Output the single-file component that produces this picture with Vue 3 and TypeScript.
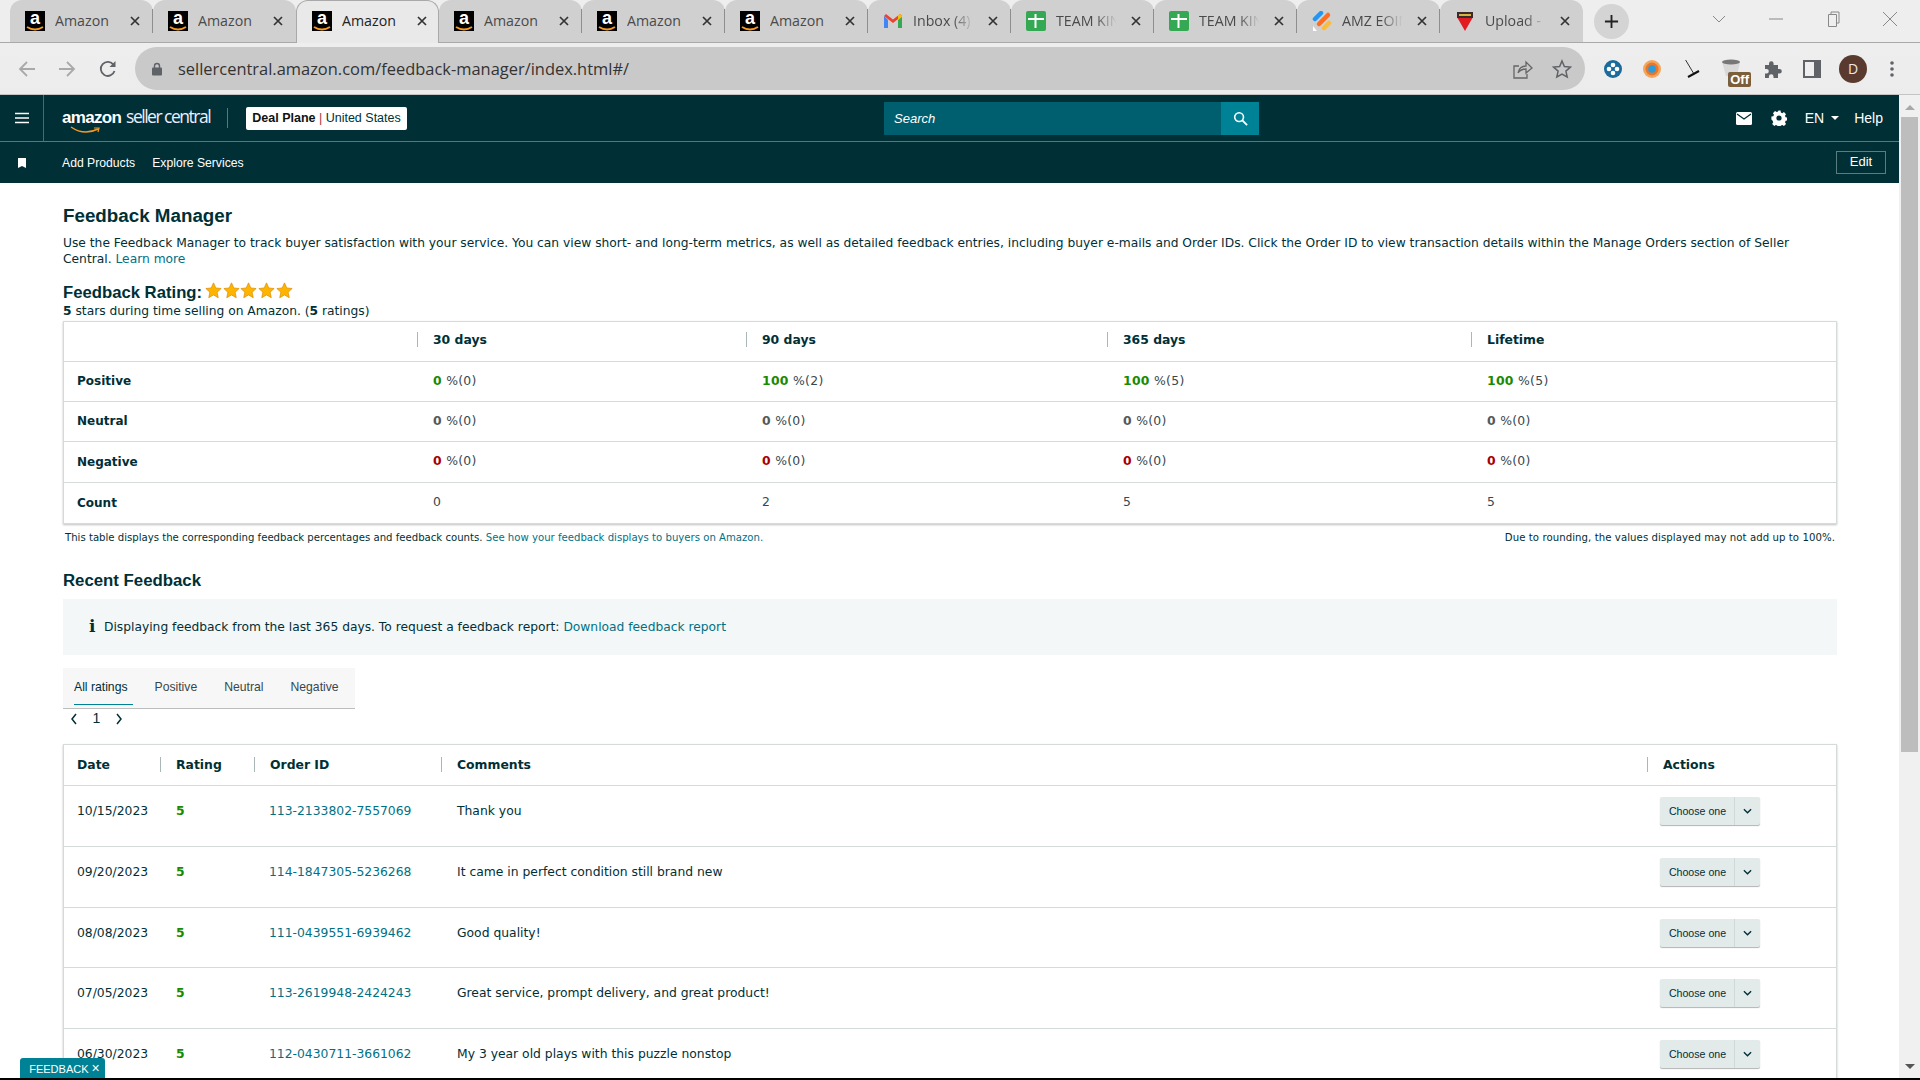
<script setup lang="ts">
interface Tab { title: string; kind: string; active?: boolean; fade?: boolean; noSep?: boolean }
const tabs: Tab[] = [
  { title: 'Amazon', kind: 'amazon' },
  { title: 'Amazon', kind: 'amazon', noSep: true },
  { title: 'Amazon', kind: 'amazon', active: true, noSep: true },
  { title: 'Amazon', kind: 'amazon' },
  { title: 'Amazon', kind: 'amazon' },
  { title: 'Amazon', kind: 'amazon' },
  { title: 'Inbox (4)', kind: 'gmail', fade: true },
  { title: 'TEAM KING', kind: 'sheet', fade: true },
  { title: 'TEAM KING', kind: 'sheet', fade: true },
  { title: 'AMZ EOIN', kind: 'amz', fade: true },
  { title: 'Upload - Ama', kind: 'upload', fade: true, noSep: true },
]
interface Metric { label: string; tone: string; cells: [string, string][] }
const metrics: Metric[] = [
  { label: 'Positive', tone: 'green', cells: [['0', '(0)'], ['100', '(2)'], ['100', '(5)'], ['100', '(5)']] },
  { label: 'Neutral', tone: 'grey', cells: [['0', '(0)'], ['0', '(0)'], ['0', '(0)'], ['0', '(0)']] },
  { label: 'Negative', tone: 'red', cells: [['0', '(0)'], ['0', '(0)'], ['0', '(0)'], ['0', '(0)']] },
]
const counts = ['0', '2', '5', '5']
const periods = ['30 days', '90 days', '365 days', 'Lifetime']
const ratingTabs = ['All ratings', 'Positive', 'Neutral', 'Negative']
const feedback = [
  { date: '10/15/2023', id: '113-2133802-7557069', text: 'Thank you', h: 'r61' },
  { date: '09/20/2023', id: '114-1847305-5236268', text: 'It came in perfect condition still brand new', h: 'r61' },
  { date: '08/08/2023', id: '111-0439551-6939462', text: 'Good quality!', h: 'r60' },
  { date: '07/05/2023', id: '113-2619948-2424243', text: 'Great service, prompt delivery, and great product!', h: 'r61' },
  { date: '06/30/2023', id: '112-0430711-3661062', text: 'My 3 year old plays with this puzzle nonstop', h: 'r61' },
]
</script>

<template>
  <div class="app">
    <div class="strip">
      <div
        v-for="(t, i) in tabs"
        :key="i"
        class="tab"
        :class="{ active: t.active, sep: !t.noSep }"
      >
        <span v-if="t.kind === 'amazon'" class="fav-amazon">
          <span class="fav-a">a</span>
          <svg class="fav-smile" viewBox="0 0 20 5"><path d="M2 1 Q10 6 18 1" fill="none" stroke="#f59a23" stroke-width="2" /></svg>
        </span>
        <svg v-else-if="t.kind === 'gmail'" class="fav" viewBox="0 0 20 20">
          <path d="M1 5v12h4V9z" fill="#4285f4" />
          <path d="M19 5v12h-4V9z" fill="#34a853" />
          <path d="M1 5l9 7 9-7-2-2-7 5.400L3 3z" fill="#ea4335" />
          <path d="M15 4v5l4-3V5l-2-2z" fill="#fbbc04" />
        </svg>
        <svg v-else-if="t.kind === 'sheet'" class="fav" viewBox="0 0 20 20">
          <rect width="20" height="20" rx="2" fill="#34a853" />
          <path d="M2 8h16M9.500 3v14" stroke="#fff" stroke-width="2" />
        </svg>
        <svg v-else-if="t.kind === 'amz'" class="fav" viewBox="0 0 20 20">
          <path d="M3 8L9 2" stroke="#2196f3" stroke-width="4.500" stroke-linecap="round" />
          <path d="M7 13L16 4" stroke="#ff6d1f" stroke-width="4.500" stroke-linecap="round" />
          <path d="M12 17L17 12" stroke="#fbbc3c" stroke-width="4.500" stroke-linecap="round" />
          <path d="M1 15l4 5H1z" fill="#fff" />
        </svg>
        <svg v-else class="fav" viewBox="0 0 20 20">
          <path d="M2 6h16L10 20z" fill="#e21b23" />
          <rect x="2" y="1" width="16" height="6" fill="#3a2a2a" />
          <rect x="4" y="3" width="12" height="2" fill="#d8b33c" />
        </svg>
        <span class="tab-title" :class="{ fade: t.fade }">{{ t.title }}</span>
        <svg class="tab-x" viewBox="0 0 10 10"><path d="M1 1l8 8M9 1l-8 8" stroke="#333" stroke-width="1.700" fill="none" /></svg>
      </div>
      <div class="plus"><svg viewBox="0 0 16 16"><path d="M8 1v14M1 8h14" stroke="#222" stroke-width="2" /></svg></div>
      <div class="winctl">
        <svg class="wc w-chev" viewBox="0 0 16 16"><path d="M2 5l6 6 6-6" fill="none" stroke="#888" /></svg>
        <svg class="wc w-min" viewBox="0 0 16 16"><path d="M1 8h14" stroke="#888" /></svg>
        <svg class="wc w-res" viewBox="0 0 16 16"><path d="M3.500 3.500h8v12h-8zM6 3.500V1h8v11h-2.500" fill="none" stroke="#888" /></svg>
        <svg class="wc w-close" viewBox="0 0 16 16"><path d="M1 1l14 14M15 1L1 15" stroke="#888" /></svg>
      </div>
    </div>

    <div class="toolbar">
      <svg class="tb-nav" viewBox="0 0 18 18"><path d="M17 9H2M9 2L2 9l7 7" fill="none" stroke="#a9a9a9" stroke-width="1.800" /></svg>
      <svg class="tb-nav tb-fwd" viewBox="0 0 18 18"><path d="M1 9h15M9 2l7 7-7 7" fill="none" stroke="#a9a9a9" stroke-width="1.800" /></svg>
      <svg class="tb-nav tb-rel" viewBox="0 0 18 18"><path d="M15.500 11a7 7 0 1 1-.9-6" fill="none" stroke="#5f6368" stroke-width="1.800" /><path d="M16.500 1v6h-6z" fill="#5f6368" /></svg>
      <div class="pill">
        <svg class="lock" viewBox="0 0 12 14"><rect x="1" y="5.500" width="10" height="8" rx="1" fill="#5f6368" /><path d="M3.500 6V4a2.500 2.500 0 0 1 5 0v2" fill="none" stroke="#5f6368" stroke-width="1.400" /></svg>
        <span class="url">sellercentral.amazon.com/feedback-manager/index.html#/</span>
        <svg class="pill-share" viewBox="0 0 20 20"><path d="M6 7H1v12h13v-4" fill="none" stroke="#666" stroke-width="1.300" /><path d="M5 14c1-5 4-7 8-7V3l6 6-6 5v-4c-3 0-6 1-8 4z" fill="none" stroke="#666" stroke-width="1.300" /></svg>
        <svg class="pill-star" viewBox="0 0 20 20"><path d="M10 2l2.400 5.500 6 .6-4.500 4 1.300 5.900L10 15l-5.200 3 1.300-5.900-4.500-4 6-.6z" fill="none" stroke="#5f6368" stroke-width="1.500" /></svg>
      </div>
      <div class="exts">
        <svg class="ext" viewBox="0 0 18 18"><circle cx="9" cy="9" r="9" fill="#1b6a9c" /><circle cx="9" cy="5" r="2.300" fill="#fff" /><circle cx="9" cy="13" r="2.300" fill="#fff" /><circle cx="5" cy="9" r="2.300" fill="#fff" /><circle cx="13" cy="9" r="2.300" fill="#fff" /></svg>
        <svg class="ext" viewBox="0 0 18 18"><circle cx="9" cy="9" r="9" fill="#f2a65a" /><circle cx="9" cy="9" r="6.500" fill="#e8762c" /><circle cx="9" cy="9" r="3.800" fill="#2a9bdc" /></svg>
        <svg class="ext" viewBox="0 0 18 18"><path d="M3 -1L12 14" stroke="#333" stroke-width="1" /><path d="M6 17L17 11" stroke="#111" stroke-width="2" /></svg>
        <span class="ext-off">
          <svg class="off-cup" viewBox="0 0 22 18"><path d="M1 3h18l-3 14H5z" fill="#d8d8d8" /><ellipse cx="10" cy="3" rx="9" ry="2.500" fill="#777" /></svg>
          <span class="off-badge">Off</span>
        </span>
        <svg class="ext" viewBox="0 0 18 18"><path d="M1 5h4V3.500a2.300 2.300 0 0 1 4.600 0V5h4.400v4h1.500a2.300 2.300 0 0 1 0 4.600H14V18H9.500v-1.500a2.300 2.300 0 0 0-4.600 0V18H1v-4.500h1.500a2.300 2.300 0 0 0 0-4.600H1z" fill="#5f6368" /></svg>
        <svg class="ext" viewBox="0 0 18 18"><path d="M0 0h18v18H0z" fill="#5f6368" /><path d="M2 2h9v14H2z" fill="#eee" /></svg>
        <span class="avatar">D</span>
        <svg class="dots" viewBox="0 0 4 18"><circle cx="2" cy="3" r="1.800" fill="#5f6368" /><circle cx="2" cy="9" r="1.800" fill="#5f6368" /><circle cx="2" cy="15" r="1.800" fill="#5f6368" /></svg>
      </div>
    </div>

    <div class="page">
      <div class="viewport">
        <header class="topbar">
          <div class="burger"><svg viewBox="0 0 14 12"><path d="M0 1.500h14M0 6h14M0 10.500h14" stroke="#fff" stroke-width="1.600" /></svg></div>
          <div class="logo">
            <span class="logo-a">amazon</span><span class="logo-s">seller central</span>
            <svg class="logo-smile" viewBox="0 0 32 8"><path d="M1 1Q14 10 28 3" fill="none" stroke="#f59a23" stroke-width="1.500" /><path d="M24 2l5 0-1 4" fill="none" stroke="#f59a23" stroke-width="1.200" /></svg>
          </div>
          <div class="logo-div"></div>
          <div class="badge"><b>Deal Plane</b> <span class="pipe">|</span> United States</div>
          <div class="search">
            <span class="search-ph">Search</span>
            <div class="search-btn"><svg viewBox="0 0 16 16"><circle cx="6.500" cy="6.500" r="4.700" fill="none" stroke="#fff" stroke-width="1.700" /><path d="M10 10l5 5" stroke="#fff" stroke-width="2" /></svg></div>
          </div>
          <div class="top-right">
            <svg class="mail" viewBox="0 0 16 13"><rect width="16" height="13" rx="1.500" fill="#fff" /><path d="M1 2l7 5 7-5" fill="none" stroke="#002f36" stroke-width="1.300" /></svg>
            <svg class="gear" viewBox="0 0 16 16"><path d="M8 0l1.600.2.400 2 1.500.7 1.700-1.100 2.200 2.200-1.100 1.700.6 1.500 2.100.4v3l-2 .4-.7 1.500 1.100 1.700-2.200 2.200-1.700-1.100-1.500.6-.4 2.100h-3l-.4-2-1.500-.7-1.700 1.100-2.200-2.200 1.100-1.700-.6-1.500L0 9.500v-3l2-.4.700-1.500L1.600 2.900l2.200-2.200 1.700 1.100L7 1.200 7.400 0z" fill="#fff" transform="translate(0.400 0.400) scale(0.95)" /><circle cx="8" cy="8" r="2.600" fill="#002f36" /></svg>
            <span class="lang">EN</span>
            <span class="caret"></span>
            <span class="help">Help</span>
          </div>
        </header>
        <nav class="navbar">
          <svg class="bookmark" viewBox="0 0 8 10"><path d="M0 0h8v10L4 8 0 10z" fill="#fff" /></svg>
          <span class="nav-item">Add Products</span>
          <span class="nav-item nav-second">Explore Services</span>
          <span class="edit">Edit</span>
        </nav>

        <main class="content">
          <h1 class="title">Feedback Manager</h1>
          <p class="intro">Use the Feedback Manager to track buyer satisfaction with your service. You can view short- and long-term metrics, as well as detailed feedback entries, including buyer e-mails and Order IDs. Click the Order ID to view transaction details within the Manage Orders section of Seller Central. <a class="link">Learn more</a></p>
          <div class="rating-head">
            <h2 class="rating-title">Feedback Rating:</h2>
            <svg v-for="n in 5" :key="n" class="star" viewBox="0 0 20 20"><path d="M10 1l2.700 6 6.300.7-4.700 4.300 1.300 6.500L10 15.200 4.400 18.500 5.700 12 1 7.700 7.300 7z" fill="#ffb400" stroke="#d98a00" stroke-width=".8" /></svg>
          </div>
          <p class="rating-sub"><b>5</b> stars during time selling on Amazon. (<b>5</b> ratings)</p>

          <section class="card metrics">
            <div class="m-row m-head">
              <div class="m-cell"></div>
              <div v-for="p in periods" :key="p" class="m-cell"><span class="th">{{ p }}</span></div>
            </div>
            <div v-for="m in metrics" :key="m.label" class="m-row" :class="{ 'm-tall': m.label === 'Negative' }">
              <div class="m-cell m-label">{{ m.label }}</div>
              <div v-for="(c, i) in m.cells" :key="i" class="m-cell m-val"><b :class="m.tone">{{ c[0] }}</b> %{{ c[1] }}</div>
            </div>
            <div class="m-row m-last">
              <div class="m-cell m-label">Count</div>
              <div v-for="(c, i) in counts" :key="i" class="m-cell m-val">{{ c }}</div>
            </div>
          </section>
          <div class="notes">
            <span>This table displays the corresponding feedback percentages and feedback counts. <a class="link">See how your feedback displays to buyers on Amazon.</a></span>
            <span class="note-right">Due to rounding, the values displayed may not add up to 100%.</span>
          </div>

          <h2 class="recent">Recent Feedback</h2>
          <div class="info">
            <span class="info-i">i</span>
            <span>Displaying feedback from the last 365 days. To request a feedback report: <a class="link">Download feedback report</a></span>
          </div>
          <div class="rtabs">
            <span v-for="(r, i) in ratingTabs" :key="r" class="rtab" :class="{ on: i === 0 }">{{ r }}</span>
          </div>
          <div class="pager">
            <svg class="pg" viewBox="0 0 8 12"><path d="M6 1L2 6l4 5" fill="none" stroke="#002f36" stroke-width="1.500" /></svg>
            <span class="pg-n">1</span>
            <svg class="pg" viewBox="0 0 8 12"><path d="M2 1l4 5-4 5" fill="none" stroke="#002f36" stroke-width="1.500" /></svg>
          </div>

          <section class="card fb">
            <div class="f-row f-head">
              <div class="f-cell"><span class="th-first">Date</span></div>
              <div class="f-cell"><span class="th">Rating</span></div>
              <div class="f-cell"><span class="th">Order ID</span></div>
              <div class="f-cell"><span class="th">Comments</span></div>
              <div class="f-cell"><span class="th">Actions</span></div>
            </div>
            <div v-for="f in feedback" :key="f.id" class="f-row" :class="f.h">
              <div class="f-cell f-date">{{ f.date }}</div>
              <div class="f-cell f-rate"><b class="green">5</b></div>
              <div class="f-cell f-id"><a class="link">{{ f.id }}</a></div>
              <div class="f-cell f-text">{{ f.text }}</div>
              <div class="f-cell f-act">
                <div class="choose"><span class="choose-l">Choose one</span><span class="choose-r"><svg viewBox="0 0 10 6"><path d="M1 1l4 4 4-4" fill="none" stroke="#002f36" stroke-width="1.500" /></svg></span></div>
              </div>
            </div>
          </section>
        </main>
        <div class="fb-tab">FEEDBACK <span class="fb-x">×</span></div>
      </div>
      <div class="scrollbar">
        <span class="sb-up"></span>
        <div class="sb-thumb"></div>
        <span class="sb-down"></span>
      </div>
    </div>
    <div class="blackbar"></div>
  </div>
</template>

<style>
html, body { margin: 0; padding: 0; background: #fff; overflow: hidden; }
</style>

<style scoped>
.app { width: 1920px; height: 1080px; display: flex; flex-direction: column; overflow: hidden; font-family: "DejaVu Sans", sans-serif; color: #002f36; }
.strip { height: 43px; flex: none; box-sizing: border-box; display: flex; padding-left: 10px; background: #eeeeee; border-bottom: 1px solid #a9a9a9; }
.tab { width: 143px; height: 42px; flex: none; box-sizing: border-box; position: relative; display: flex; align-items: center; padding-left: 15px; background: #d0d0d0; border-radius: 12px 12px 0 0; }
.tab.sep::after { content: ""; position: absolute; right: 0; top: 9px; height: 24px; width: 1px; background: #8e8e8e; }
.tab.active { background: #e9e9e9; border: 1px solid #a9a9a9; border-bottom: 0; padding: 0 0 2px 15px; height: 43px; z-index: 1; }
.fav-amazon { width: 20px; height: 20px; background: #000; position: relative; flex: none; overflow: hidden; text-align: center; }
.fav-a { display: block; color: #fff; font: bold 18px/15px "Liberation Sans", sans-serif; }
.fav-smile { position: absolute; left: 0; bottom: 0; width: 20px; height: 5px; }
.fav { width: 20px; height: 20px; flex: none; }
.tab-title { width: 66px; margin-left: 10px; font: 14.200px/20px "Open Sans", sans-serif; color: #4a4a4a; white-space: nowrap; overflow: hidden; flex: none; }
.tab.active .tab-title { color: #222; }
.tab-title.fade { -webkit-mask-image: linear-gradient(90deg, #000 60%, transparent 92%); mask-image: linear-gradient(90deg, #000 60%, transparent 92%); }
.tab-x { width: 10px; height: 10px; margin-left: 9px; flex: none; }
.plus { width: 35px; height: 35px; margin: 4px 0 0 11px; border-radius: 50%; background: #d4d4d4; display: flex; align-items: center; justify-content: center; flex: none; }
.plus svg { width: 15px; height: 15px; }
.winctl { display: flex; align-items: center; height: 38px; margin-left: 82px; }
.wc { width: 16px; height: 16px; flex: none; }
.w-min, .w-res, .w-close { margin-left: 41px; }
.toolbar { height: 52px; flex: none; box-sizing: border-box; display: flex; align-items: center; background: linear-gradient(#eeeeee, #ececec); border-bottom: 1px solid #c4c4c4; padding-bottom: 0; }
.tb-nav { width: 18px; height: 18px; margin-left: 18px; flex: none; }
.tb-fwd { margin-left: 22px; }
.tb-rel { margin-left: 23px; }
.pill { width: 1450px; height: 43px; margin-left: 18px; flex: none; border-radius: 22px; background: #c9c9c9; display: flex; align-items: center; }
.lock { width: 12px; height: 14px; margin-left: 16px; flex: none; }
.url { margin-left: 15px; font: 16.450px/24px "Open Sans", sans-serif; color: #333; white-space: nowrap; }
.pill-share { width: 20px; height: 20px; margin-left: auto; flex: none; }
.pill-star { width: 20px; height: 20px; margin: 0 13px 0 19px; flex: none; }
.exts { display: flex; align-items: center; margin-left: 19px; position: relative; }
.ext { width: 18px; height: 18px; flex: none; margin-right: 21px; }
.ext-off { width: 28px; height: 26px; margin: 6px 15px 0 0; position: relative; flex: none; }
.off-cup { position: absolute; left: 0; top: 0; width: 22px; height: 18px; }
.off-badge { position: absolute; right: -2px; bottom: -2px; background: #7b5e3a; color: #fff; font: bold 13px/15px "Liberation Sans", sans-serif; padding: 0 2px; border-radius: 2px; }
.avatar { width: 28px; height: 28px; border-radius: 50%; background: #5a3a2e; color: #f0e8e4; font: 14px/28px "Open Sans", sans-serif; text-align: center; flex: none; margin-left: -3px; }
.dots { width: 4px; height: 18px; margin-left: 23px; flex: none; }

.page { flex: 1; min-height: 0; display: flex; }
.viewport { flex: 1; min-width: 0; overflow: hidden; position: relative; background: #fff; }
.scrollbar { width: 21px; flex: none; background: #f0f0f0; display: flex; flex-direction: column; align-items: center; }
.sb-up, .sb-down { width: 0; height: 0; border-left: 5px solid transparent; border-right: 5px solid transparent; flex: none; }
.sb-up { border-bottom: 5px solid #a8a8a8; margin-top: 10px; }
.sb-thumb { width: 17px; height: 635px; margin-top: 7px; background: #bdbdbd; flex: none; }
.sb-down { border-top: 5px solid #555; margin-top: auto; margin-bottom: 9px; }
.blackbar { height: 2px; background: #000; flex: none; }

.topbar { height: 47px; box-sizing: border-box; background: #002f36; border-bottom: 1px solid #5b7679; display: flex; align-items: center; color: #fff; font-family: "Liberation Sans", sans-serif; }
.burger { width: 44px; height: 46px; box-sizing: border-box; border-right: 1px solid #4c6a6d; display: flex; align-items: center; justify-content: center; flex: none; }
.burger svg { width: 14px; height: 12px; }
.logo { margin-left: 18px; position: relative; display: flex; align-items: baseline; height: 24px; width: 149px; flex: none; white-space: nowrap; margin-top: -4px; }
.logo-a { font: bold 17px/24px "Liberation Sans", sans-serif; letter-spacing: -0.700px; }
.logo-s { font: 17.500px/24px "Open Sans", sans-serif; letter-spacing: -1.500px; margin-left: 5px; color: #eef; }
.logo-smile { position: absolute; left: 8px; top: 22px; width: 32px; height: 8px; }
.logo-div { width: 1px; height: 20px; background: #55797c; margin-left: 16px; flex: none; }
.badge { margin-left: 18px; height: 23px; box-sizing: border-box; width: 161px; background: #fff; border-radius: 2px; color: #002f36; font-size: 12.500px; line-height: 23px; text-align: center; white-space: nowrap; flex: none; }
.badge b { font-weight: bold; color: #111; }
.pipe { color: #a33; }
.search { margin-left: 477px; width: 375px; height: 33px; background: #005f6e; display: flex; align-items: center; justify-content: space-between; flex: none; }
.search-ph { margin-left: 10px; font-size: 13px; font-style: italic; color: #fff; }
.search-btn { width: 38px; height: 33px; background: #008296; display: flex; align-items: center; justify-content: center; }
.search-btn svg { width: 15px; height: 15px; }
.top-right { margin-left: auto; display: flex; align-items: center; margin-right: 16px; font-size: 14px; }
.mail { width: 16px; height: 13px; flex: none; }
.gear { width: 16px; height: 16px; margin-left: 19px; flex: none; }
.lang { margin-left: 18px; }
.caret { width: 0; height: 0; margin-left: 7px; border-left: 4px solid transparent; border-right: 4px solid transparent; border-top: 4px solid #fff; }
.help { margin-left: 15px; font-size: 14px; }

.navbar { height: 41px; background: #002f36; display: flex; align-items: center; color: #fff; font: 12.200px "Liberation Sans", sans-serif; }
.bookmark { width: 8px; height: 10px; margin-left: 18px; flex: none; }
.nav-item { margin-left: 36px; font-weight: 500; }
.nav-second { margin-left: 17px; }
.edit { margin-left: auto; margin-right: 13px; width: 50px; height: 23px; box-sizing: border-box; border: 1px solid #5b7d80; text-align: center; line-height: 20px; font-size: 13px; }

.content { padding: 21px 62px 0 63px; }
.title { margin: 0; font: bold 18.800px/24px "Liberation Sans", sans-serif; }
.intro { margin: 7px 0 0; font-size: 12.270px; line-height: 16px; }
.link { color: #007185; text-decoration: none; }
.rating-head { margin-top: 14px; height: 23px; display: flex; align-items: center; }
.rating-title { margin: 0 3px 0 0; font: bold 16.700px/24px "Liberation Sans", sans-serif; }
.star { width: 17px; height: 17px; margin-right: 0.700px; margin-top: -4px; flex: none; }
.rating-sub { margin: -1px 0 0; font-size: 12.270px; line-height: 16px; }
.card { border: 1px solid #d5dbdb; box-shadow: 0 1px 2px rgba(0, 0, 0, 0.25); background: #fff; box-sizing: border-box; }
.metrics { margin-top: 2px; }
.m-row { display: grid; grid-template-columns: 353px 329px 361px 364px 1fr; height: 40px; box-sizing: border-box; border-bottom: 1px solid #d5dbdb; align-items: center; font-size: 12.400px; padding-bottom: 1px; }
.m-head { padding-bottom: 4px; }
.m-tall { height: 41px; }
.m-last { border-bottom: 0; }
.m-cell { padding-left: 0; }
.m-label { font-weight: bold; padding-left: 13px; font-size: 12px; }
.m-val { padding-left: 16px; color: #37474f; letter-spacing: .3px; margin-top: -2px; }
.th { display: block; border-left: 1px solid #a9b7b8; padding-left: 15px; font-weight: bold; line-height: 15px; font-size: 12.400px; }
.th-first { display: block; padding-left: 13px; font-weight: bold; line-height: 15px; font-size: 12.400px; }
.green { color: #1a8a00; }
.grey { color: #565959; }
.red { color: #a80000; }
.notes { margin-top: 7px; display: flex; justify-content: space-between; padding: 0 2px; font-size: 10.150px; line-height: 14px; color: #002f36; }
.note-right { letter-spacing: .08px; }
.recent { margin: 24px 0 0; font: bold 16.800px/24px "Liberation Sans", sans-serif; }
.info { margin-top: 6px; height: 56px; background: #f4f7f7; display: flex; align-items: center; padding-left: 26px; font-size: 12.270px; }
.info-i { width: 15px; font: bold 17px "DejaVu Serif", serif; flex: none; margin-top: -2px; }
.rtabs { margin-top: 13px; width: 292px; height: 41px; box-sizing: border-box; background: #f7f7f7; border-bottom: 1px solid #bdbdbd; display: flex; padding-left: 11px; font: 12.200px "Liberation Sans", sans-serif; color: #37474f; white-space: nowrap; }
.rtab { margin-right: 27px; line-height: 38px; height: 37px; box-sizing: border-box; }
.rtab.on { color: #002f36; border-bottom: 1px solid #008296; padding-right: 5px; margin-right: 22px; }
.pager { height: 20px; display: flex; align-items: center; padding-left: 7px; }
.pg { width: 8px; height: 12px; flex: none; }
.pg-n { width: 37px; text-align: center; font: 14px "Liberation Sans", sans-serif; margin-top: -2px; }
.fb { margin-top: 15px; }
.f-row { display: grid; grid-template-columns: 96px 94px 187px 1206px 1fr; height: 61px; box-sizing: border-box; border-bottom: 1px solid #d5dbdb; font-size: 12.350px; }
.r60 { height: 60px; }
.f-head { height: 41px; align-items: center; font-weight: bold; padding-bottom: 2px; }
.f-cell { min-width: 0; }
.f-date { padding: 17px 0 0 13px; white-space: nowrap; line-height: 16px; }
.f-rate { padding: 17px 0 0 16px; line-height: 16px; }
.f-id { padding: 17px 0 0 15px; line-height: 16px; white-space: nowrap; }
.f-text { padding: 17px 0 0 16px; line-height: 16px; }
.f-act { padding: 11px 0 0 13px; }
.choose { width: 100px; height: 28px; display: flex; background: #e3eaea; border-radius: 2px; box-shadow: 0 1px 1px rgba(0, 0, 0, .3); font: 10.600px/28px "Liberation Sans", sans-serif; }
.choose-l { width: 75px; text-align: center; box-sizing: border-box; border-right: 1px solid #d0d9d9; padding-left: 1px; flex: none; }
.choose-r { flex: 1; display: flex; align-items: center; justify-content: center; }
.choose-r svg { width: 9px; height: 6px; }
.fb-tab { position: absolute; left: 20px; bottom: 0; width: 85px; height: 20px; box-sizing: border-box; background: #008296; color: #fff; border-radius: 3px 3px 0 0; font: 11px/21px "Liberation Sans", sans-serif; text-align: center; white-space: nowrap; padding-left: 4px; }
.fb-x { font-size: 14px; }
</style>
